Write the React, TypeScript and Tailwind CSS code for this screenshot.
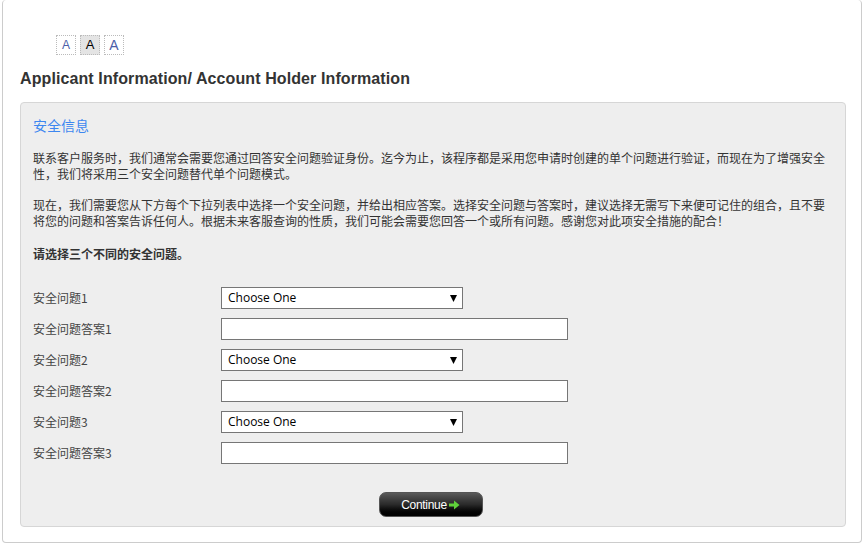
import React from "react"

const cjk = "font-['Microsoft_YaHei','Noto_Sans_CJK_SC',sans-serif]"

const rows = [
  { label: "安全问题1", kind: "select" },
  { label: "安全问题答案1", kind: "input" },
  { label: "安全问题2", kind: "select" },
  { label: "安全问题答案2", kind: "input" },
  { label: "安全问题3", kind: "select" },
  { label: "安全问题答案3", kind: "input" },
]

function SizeButton({ size, active, color }: { size: string; active?: boolean; color: string }) {
  return (
    <div
      className={`flex h-[20px] w-[20px] items-center justify-center border border-dotted border-[#bbbbbb] font-['Liberation_Sans',Arial,sans-serif] ${size} ${color} ${
        active ? "bg-[#e4e4e4]" : "bg-white"
      }`}
    >
      A
    </div>
  )
}

export default function App() {
  return (
    <div className="h-[545px] w-[864px] bg-white pl-[2px] pr-[2px]">
      <div className="h-[543px] rounded-[4px] border border-t-0 border-[#cccccc] pl-[17px] pr-[15px] pt-[35px]">
        <div className="flex gap-[4px] pl-[36px]">
          <SizeButton size="text-[12px]" color="text-[#4b5ea8]" />
          <SizeButton size="text-[13px]" color="text-black" active />
          <SizeButton size="text-[14px]" color="text-[#4b5ea8]" />
        </div>

        <h1 className="mt-[14px] font-['Liberation_Sans',Arial,sans-serif] text-[16px] font-bold leading-[20px] tracking-[0.1px] text-[#333333]">
          Applicant Information/ Account Holder Information
        </h1>

        <div className={`mt-[13px] rounded-[4px] border border-[#d6d6d6] bg-[#eeeeee] pb-[9px] pl-[12px] pr-[13px] pt-[12px] text-[#333333] ${cjk}`}>
          <h2 className="text-[14px] leading-[20px] text-[#3d87f0]">安全信息</h2>

          <p className="mt-[15px] text-[12px] leading-[16px]">
            联系客户服务时，我们通常会需要您通过回答安全问题验证身份。迄今为止，该程序都是采用您申请时创建的单个问题进行验证，而现在为了增强安全性，我们将采用三个安全问题替代单个问题模式。
          </p>

          <p className="mt-[15px] text-[12px] leading-[16px]">
            现在，我们需要您从下方每个下拉列表中选择一个安全问题，并给出相应答案。选择安全问题与答案时，建议选择无需写下来便可记住的组合，且不要将您的问题和答案告诉任何人。根据未来客服查询的性质，我们可能会需要您回答一个或所有问题。感谢您对此项安全措施的配合！
          </p>

          <p className="mt-[17px] text-[12px] font-bold leading-[16px]">请选择三个不同的安全问题。</p>

          <div className="mt-[25px] flex flex-col gap-[9px]">
            {rows.map((r) => (
              <div key={r.label} className="flex h-[22px] items-center">
                <label className="w-[188px] text-[12px] leading-[16px] text-[#444444]">{r.label}</label>
                {r.kind === "select" ? (
                  <div className="relative h-[22px] w-[242px]">
                    <select className="block h-[22px] w-full appearance-none border border-[#767676] bg-white pl-[6px] font-['Open_Sans','Noto_Sans',sans-serif] text-[12px] text-black outline-none">
                      <option>Choose One</option>
                    </select>
                    <svg className="pointer-events-none absolute right-[6px] top-[8px]" width="7" height="7" viewBox="0 0 7 7">
                      <path d="M0 0h7L3.5 7z" fill="#000" />
                    </svg>
                  </div>
                ) : (
                  <input type="text" className="block h-[22px] w-[347px] border border-[#767676] bg-white px-[4px] text-[12px] outline-none" />
                )}
              </div>
            ))}
          </div>

          <div className="mt-[28px] flex justify-center pr-[4px]">
            <button className="flex h-[25px] w-[104px] items-center justify-center gap-[2px] rounded-[7px] border border-[#555555] bg-gradient-to-b from-[#5a5a5a] via-[#2a2a2a] to-black font-['Liberation_Sans',Arial,sans-serif] text-[12px] tracking-[-0.3px] text-white">
              Continue
              <svg width="11" height="10" viewBox="0 0 11 10">
                <path d="M0 3.5h5V0.5L10.5 5 5 9.5V6.5H0z" fill="#5fd13a" />
              </svg>
            </button>
          </div>
        </div>
      </div>
    </div>
  )
}
